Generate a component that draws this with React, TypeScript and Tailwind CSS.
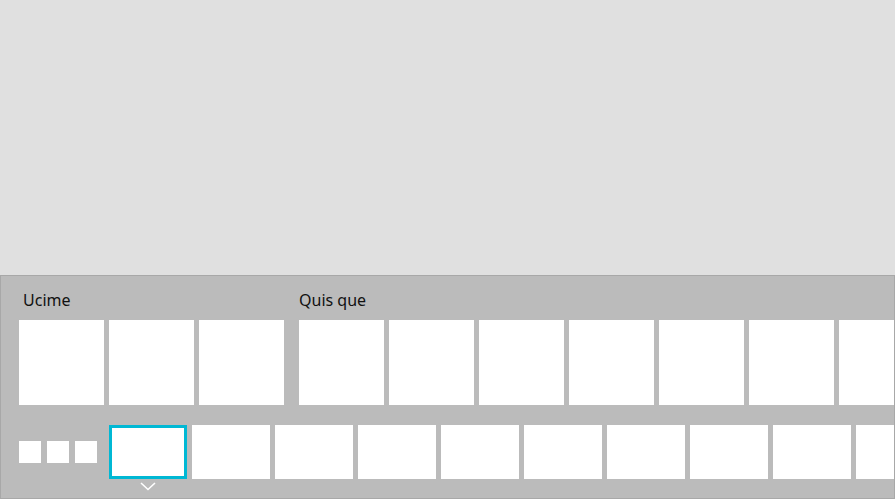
import React from "react";

const groups = [
  { label: "Ucime", count: 3, pad: "pl-[4px]" },
  { label: "Quis que", count: 7, pad: "pl-0" },
];

export default function App() {
  return (
    <div className="w-[895px] h-[499px] flex flex-col bg-[#e0e0e0] overflow-hidden" style={{ fontFamily: '"Noto Sans", sans-serif' }}>
      {/* Empty canvas */}
      <div className="h-[275px] shrink-0" />

      {/* Bottom tray */}
      <div className="flex-1 bg-[#bbbbbb] border border-[#a8a8a8] overflow-hidden flex flex-col">
        <div className="flex gap-[15px] pl-[18px] pt-[13px]">
          {groups.map((g) => (
            <div key={g.label} className="flex flex-col shrink-0">
              <div className={`h-[31px] ${g.pad} text-[16px] leading-[22px] text-[#111111]`}>{g.label}</div>
              <div className="flex gap-[5px]">
                {Array.from({ length: g.count }).map((_, i) => (
                  <div key={i} className="w-[85px] h-[85px] bg-white shrink-0" />
                ))}
              </div>
            </div>
          ))}
        </div>

        <div className="flex items-center pl-[18px] mt-[20px]">
          <div className="flex gap-[6px] shrink-0">
            <div className="w-[22px] h-[22px] bg-white" />
            <div className="w-[22px] h-[22px] bg-white" />
            <div className="w-[22px] h-[22px] bg-white" />
          </div>
          <div className="flex gap-[5px] ml-[12px]">
            <div className="relative w-[78px] h-[54px] bg-white border-[3px] border-[#00b8d4] shrink-0">
              <svg className="absolute left-1/2 -translate-x-1/2 top-[54px]" width="16" height="9" viewBox="0 0 16 9">
                <path d="M1 1 L8 7.5 L15 1" fill="none" stroke="#ffffff" strokeWidth="1.6" />
              </svg>
            </div>
            {Array.from({ length: 9 }).map((_, i) => (
              <div key={i} className="w-[78px] h-[54px] bg-white shrink-0" />
            ))}
          </div>
        </div>
      </div>
    </div>
  );
}
